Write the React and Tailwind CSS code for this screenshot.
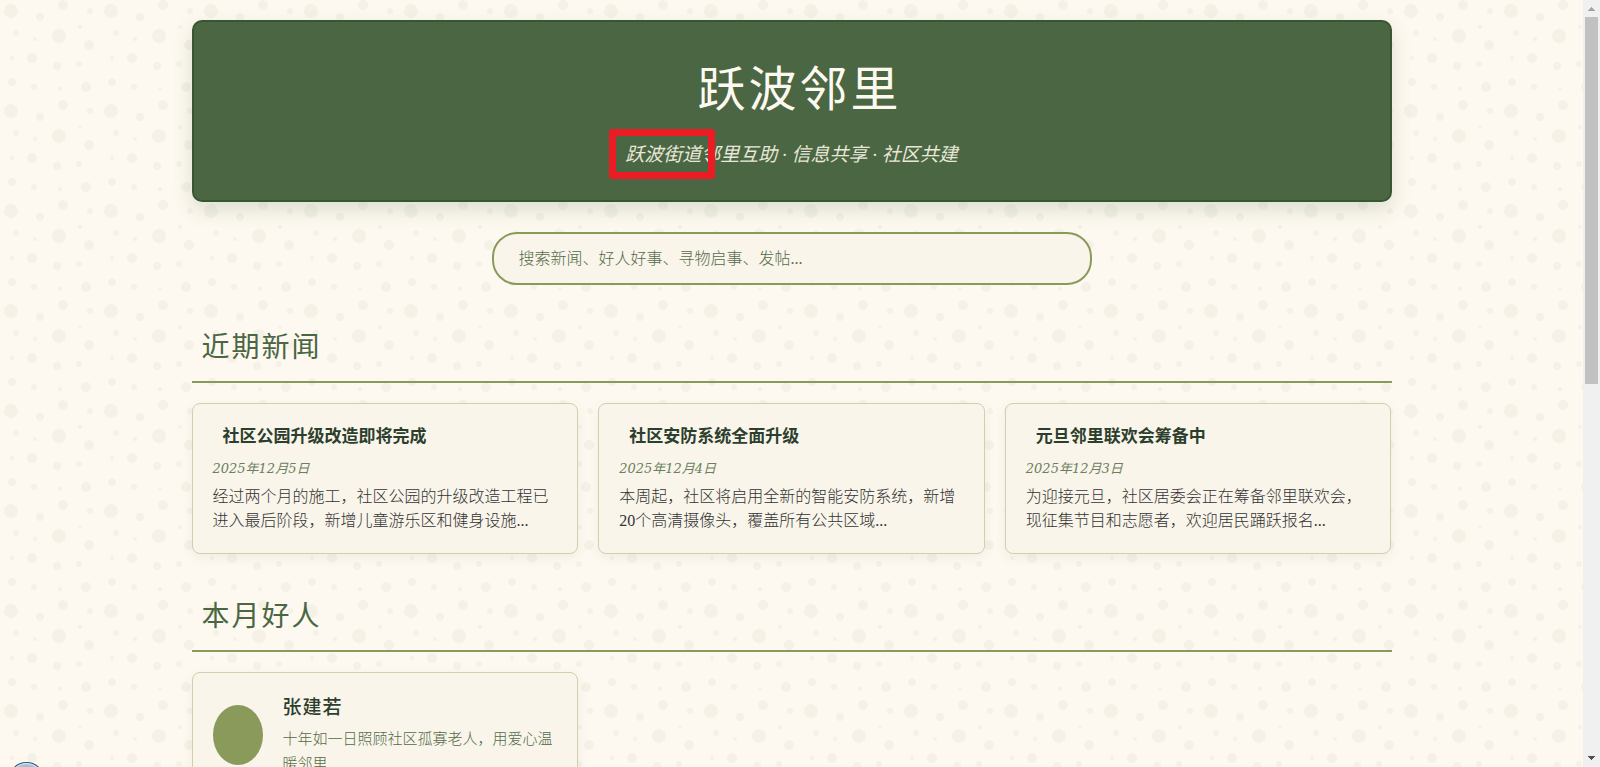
import React, { useState } from 'react';
import clsx from 'clsx';

const serif = "font-['Liberation_Serif','Noto_Sans_CJK_SC',serif]";
const wideSerif = "font-['DejaVu_Serif','Noto_Sans_CJK_SC',serif]";

// [cx, cy, r] inside one 100x100 tile
const bubbles = [
  [11, 11, 7], [59, 36, 7],
  [63, 5, 5], [89, 45, 5], [32, 58, 5], [86, 87, 5],
  [40, 17, 4], [57, 66, 4], [12, 82, 4],
  [90, 11, 3], [16, 33, 3], [79, 64, 3], [34, 87, 3],
  [80, 27, 2], [35, 39, 2], [12, 58, 2], [60, 89, 2]
];

const news = [
  {
    title: '社区公园升级改造即将完成',
    date: '2025年12月5日',
    summary: '经过两个月的施工，社区公园的升级改造工程已进入最后阶段，新增儿童游乐区和健身设施...'
  },
  {
    title: '社区安防系统全面升级',
    date: '2025年12月4日',
    summary: '本周起，社区将启用全新的智能安防系统，新增20个高清摄像头，覆盖所有公共区域...'
  },
  {
    title: '元旦邻里联欢会筹备中',
    date: '2025年12月3日',
    summary: '为迎接元旦，社区居委会正在筹备邻里联欢会，现征集节目和志愿者，欢迎居民踊跃报名...'
  }
];

const people = [
  { name: '张建若', deed: '十年如一日照顾社区孤寡老人，用爱心温暖邻里' }
];

function BubbleBackground() {
  return (
    <svg className="absolute inset-0 -z-10 h-full w-full" aria-hidden="true">
      <defs>
        <pattern id="bubbles" width="100" height="100" patternUnits="userSpaceOnUse">
          {bubbles.map(([cx, cy, r]) => (
            <circle key={`${cx}-${cy}`} cx={cx} cy={cy} r={r} fill="#f5f1e6" />
          ))}
        </pattern>
      </defs>
      <rect width="100%" height="100%" fill="url(#bubbles)" />
    </svg>
  );
}

function Banner() {
  return (
    <header className="rounded-[10px] border-2 border-[#38562f] bg-[#4a6642] px-5 pt-8 pb-[30px] text-center shadow-[0_8px_20px_rgba(74,103,65,0.18)]">
      <h1 className="pl-4 text-5xl leading-[72px] tracking-[3px] text-[#fef9f0]">
        跃波邻里
      </h1>
      <p className="relative mt-3.5 inline-block text-[19px] leading-[30px] text-[#e9e7d9] italic">
        跃波街道邻里互助 · 信息共享 · 社区共建
        {/* highlight frame */}
        <span className="absolute -top-[11px] -left-4 h-[50px] w-[106px] rounded-[3px] border-[7px] border-[#ed1c24]" />
      </p>
    </header>
  );
}

function Section({ title, children }) {
  return (
    <section className="mt-10">
      <h2 className="mb-5 border-b-2 border-[#8a9a5b] px-2.5 pb-2.5 text-[28px] leading-[46px] tracking-[2px] text-[#4a6642]">
        {title}
      </h2>
      <div className="grid grid-cols-3 gap-5">{children}</div>
    </section>
  );
}

function Card({ className, children }) {
  return (
    <article
      className={clsx(
        'rounded-lg border border-[#d4cdb0] bg-[#f9f5ea] p-5 shadow-[0_4px_12px_rgba(74,103,65,0.08)]',
        className
      )}
    >
      {children}
    </article>
  );
}

function NewsCard({ item }) {
  return (
    <Card>
      <h3 className="mb-2 px-2.5 text-[17px] leading-[25px] font-bold text-[#2c3e2d]">{item.title}</h3>
      <p className={clsx('mb-1 text-[13px] leading-6 text-[#6b7f5e] italic', wideSerif)}>{item.date}</p>
      <p className="text-base leading-6 font-light text-[#333333]">{item.summary}</p>
    </Card>
  );
}

function PersonCard({ person }) {
  return (
    <Card className="flex items-center gap-5">
      <div className="h-[60px] w-[50px] shrink-0 rounded-[50%] bg-[#8a9a5b]" />
      <div>
        <h3 className="mb-1 text-[19px] leading-[30px] font-medium tracking-[1px] text-[#2c3e2d]">{person.name}</h3>
        <p className="text-[15px] leading-[25px] font-light text-[#556b48]">{person.deed}</p>
      </div>
    </Card>
  );
}

function ScrollRail() {
  return (
    <aside className="flex h-full w-[17px] shrink-0 flex-col items-center bg-[#f0f0f0]" aria-hidden="true">
      <svg className="h-[17px] w-[17px]" viewBox="0 0 17 17" shapeRendering="crispEdges">
        <path d="M8 7h1v1h1v1h1v1h1v1H5v-1h1V9h1V8h1z" fill="#a3a3a3" />
      </svg>
      <div className="flex w-[13px] flex-1 flex-col">
        <div className="h-1/2 bg-[#c1c1c1]" />
      </div>
      <svg className="h-[17px] w-[17px]" viewBox="0 0 17 17" shapeRendering="crispEdges">
        <path d="M5 6h7v1h-1v1h-1v1H9v1H8V9H7V8H6V7H5z" fill="#505050" />
      </svg>
    </aside>
  );
}

export default function App() {
  const [query, setQuery] = useState('');

  return (
    <div className={clsx('flex h-screen overflow-hidden bg-[#fef9f0]', serif)} lang="zh-CN">
      <div className="relative isolate min-w-0 flex-1 overflow-hidden">
        <BubbleBackground />
        <main className="mx-auto max-w-[1240px] p-5">
          <Banner />
          <input
            type="search"
            aria-label="搜索"
            value={query}
            onChange={(e) => setQuery(e.target.value)}
            placeholder="搜索新闻、好人好事、寻物启事、发帖..."
            className="mx-auto mt-[30px] block h-[53px] w-full max-w-[600px] rounded-[25px] border-2 border-[#8a9a5b] bg-[#f9f5ea] px-[25px] text-base font-light text-[#2c3e2d] outline-none placeholder:text-[#556b48]"
          />
          <Section title="近期新闻">
            {news.map((item) => (
              <NewsCard key={item.title} item={item} />
            ))}
          </Section>
          <Section title="本月好人">
            {people.map((person) => (
              <PersonCard key={person.name} person={person} />
            ))}
          </Section>
        </main>
        {/* floating badge peeking over the bottom edge */}
        <svg className="absolute -bottom-8 left-2 h-[37px] w-[37px]" viewBox="0 0 37 37" aria-hidden="true">
          <circle cx="18.5" cy="18" r="18" fill="#1f5580" />
          <circle cx="18.5" cy="18" r="17" fill="#e6eef5" />
          <circle cx="18.5" cy="18" r="16" fill="#a9bfd3" />
        </svg>
      </div>
      <ScrollRail />
    </div>
  );
}
